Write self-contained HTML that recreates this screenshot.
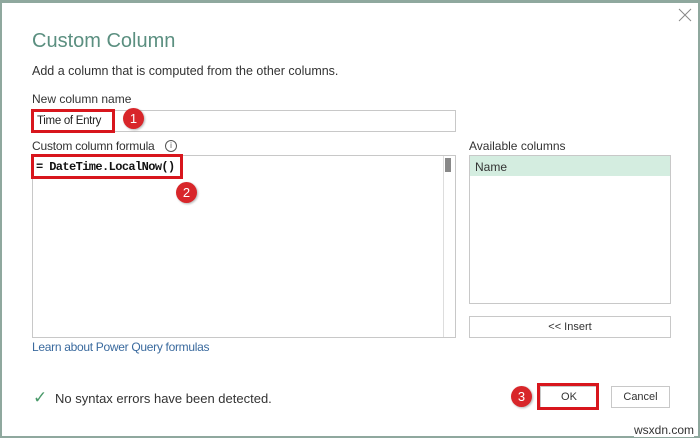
<!DOCTYPE html>
<html><head><style>
*{margin:0;padding:0;box-sizing:border-box}
body{width:700px;height:441px;background:#fff;font-family:"Liberation Sans",sans-serif;position:relative;overflow:hidden}
.frame{position:absolute;left:0;top:0;width:700px;height:438px;border:2px solid #8fa89e;border-top-width:3px}
.a{position:absolute;white-space:nowrap}
.box{position:absolute;border:1px solid #c8c8c8;background:#fff}
.red{position:absolute;border:3px solid #d8161d}
.c{position:absolute;width:21px;height:21px;border-radius:50%;background:#d8262a;color:#fff;font-size:13px;text-align:center;line-height:21px;box-shadow:1px 1px 2px rgba(0,0,0,.3)}
</style></head><body>
<div class="frame"></div>
<svg style="position:absolute;left:678px;top:8px" width="14" height="14"><path d="M1 1L13 13M13 1L1 13" stroke="#888" stroke-width="1"/></svg>
<div class="a" style="left:32px;top:30px;font-size:20px;color:#5b8f80">Custom Column</div>
<div class="a" style="left:32px;top:64px;font-size:12.5px;color:#333">Add a column that is computed from the other columns.</div>
<div class="a" style="left:32px;top:92px;font-size:12px;color:#333">New column name</div>
<div class="box" style="left:32px;top:110px;width:424px;height:22px"></div>
<div class="a" style="left:37px;top:115px;font-size:11.5px;color:#222;letter-spacing:-0.3px">Time of Entry</div>
<div class="red" style="left:31px;top:109px;width:84px;height:24px"></div>
<div class="c" style="left:123px;top:108px">1</div>
<div class="a" style="left:32px;top:139px;font-size:12px;color:#333;letter-spacing:-0.2px">Custom column formula</div>
<div class="a" style="left:165px;top:140px;width:12px;height:12px;border:1px solid #555;border-radius:50%;font-size:8px;text-align:center;line-height:10px;color:#555">i</div>
<div class="box" style="left:32px;top:155px;width:424px;height:183px"></div>
<div style="position:absolute;left:443px;top:156px;width:1px;height:181px;background:#ddd"></div>
<div style="position:absolute;left:445px;top:158px;width:6px;height:14px;background:#888"></div>
<div class="a" style="left:36px;top:160px;font-size:12px;font-family:'Liberation Mono',monospace;color:#111;letter-spacing:-0.6px;font-weight:bold">= DateTime.LocalNow()</div>
<div class="red" style="left:31px;top:154px;width:152px;height:25px"></div>
<div class="c" style="left:176px;top:182px">2</div>
<div class="a" style="left:469px;top:139px;font-size:12px;color:#333">Available columns</div>
<div class="box" style="left:469px;top:155px;width:202px;height:149px"></div>
<div style="position:absolute;left:470px;top:156px;width:200px;height:20px;background:#d4ede0"></div>
<div class="a" style="left:475px;top:160px;font-size:12px;color:#333">Name</div>
<div class="box" style="left:469px;top:316px;width:202px;height:22px;text-align:center;font-size:11px;color:#333;line-height:20px">&lt;&lt; Insert</div>
<div class="a" style="left:32px;top:340px;font-size:12px;color:#3a6a9e;letter-spacing:-0.3px">Learn about Power Query formulas</div>
<div class="a" style="left:33px;top:388px;font-size:17px;color:#4a9a6a">✓</div>
<div class="a" style="left:55px;top:391px;font-size:13px;color:#333">No syntax errors have been detected.</div>
<div class="c" style="left:511px;top:386px">3</div>
<div class="box" style="left:540px;top:386px;width:58px;height:22px;text-align:center;font-size:11px;line-height:20px;color:#333">OK</div>
<div class="red" style="left:537px;top:383px;width:62px;height:27px"></div>
<div class="box" style="left:611px;top:386px;width:59px;height:22px;text-align:center;font-size:11px;line-height:20px;color:#333">Cancel</div>
<div class="a" style="left:634px;top:423px;font-size:12px;color:#333;background:#fff">wsxdn.com</div>
</body></html>
